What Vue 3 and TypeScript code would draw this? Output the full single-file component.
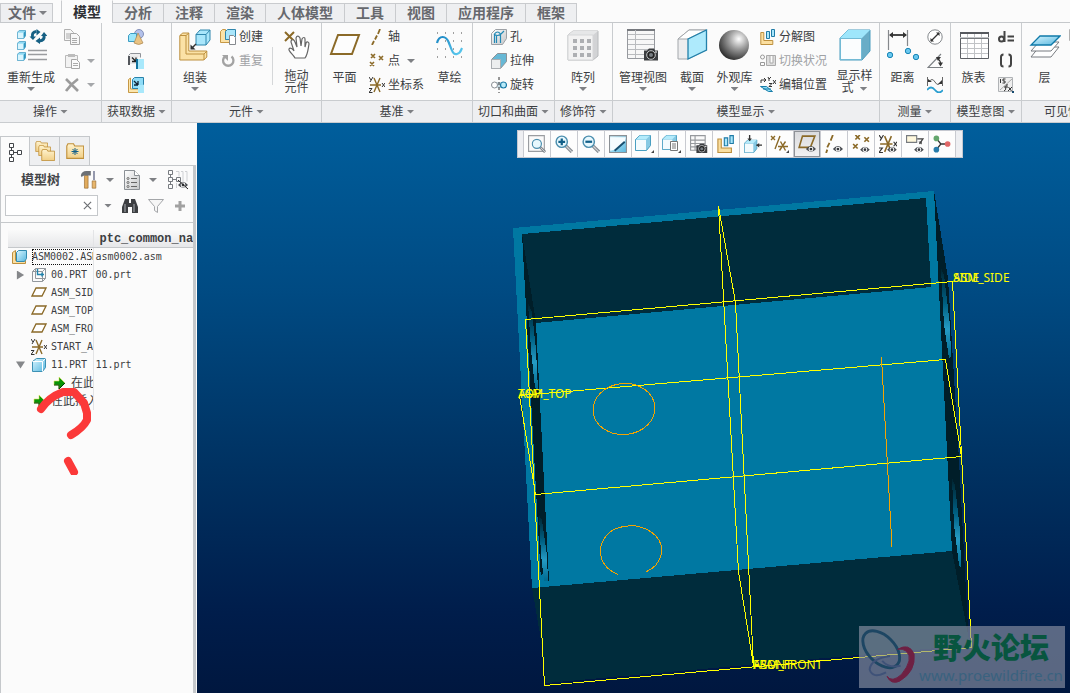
<script setup lang="ts">
import { ref } from 'vue'

interface SmallItem {
  icon: string
  label?: string
  title?: string
  disabled?: boolean
  menu?: boolean
}
interface BigItem {
  icon: string
  lines: string[]
  menu?: 'below' | 'inline'
  divided?: boolean
}
interface RibbonBlock {
  big?: BigItem
  column?: SmallItem[]
}
interface RibbonGroup {
  id: string
  label: string
  menu: boolean
  blocks: RibbonBlock[]
}
interface TreeRow {
  name: string
  common: string
  icon: string
  level: string
  expander?: 'open' | 'closed'
  focused?: boolean
}

const tabs = ['模型', '分析', '注释', '渲染', '人体模型', '工具', '视图', '应用程序', '框架']
const activeTab = ref('模型')
const search = ref('')

const groups: RibbonGroup[] = [
  {
    id: 'ops', label: '操作', menu: true,
    blocks: [
      { big: { icon: 'regen', lines: ['重新生成'], menu: 'below' } },
      {
        column: [
          { icon: 'copy', title: '复制', disabled: true },
          { icon: 'paste', title: '粘贴', disabled: true, menu: true },
          { icon: 'delete', title: '删除', disabled: true, menu: true },
        ],
      },
    ],
  },
  {
    id: 'data', label: '获取数据', menu: true,
    blocks: [
      {
        column: [
          { icon: 'udf', title: '用户定义特征' },
          { icon: 'copygeom', title: '复制几何' },
          { icon: 'shrink', title: '收缩包络' },
        ],
      },
    ],
  },
  {
    id: 'comp', label: '元件', menu: true,
    blocks: [
      { big: { icon: 'assemble', lines: ['组装'], menu: 'below' } },
      { column: [{ icon: 'create', label: '创建' }, { icon: 'repeat', label: '重复', disabled: true }] },
      { big: { icon: 'drag', lines: ['拖动', '元件'], divided: true } },
    ],
  },
  {
    id: 'datum', label: '基准', menu: true,
    blocks: [
      { big: { icon: 'plane', lines: ['平面'] } },
      {
        column: [
          { icon: 'axis', label: '轴' },
          { icon: 'point', label: '点', menu: true },
          { icon: 'csys', label: '坐标系' },
        ],
      },
      { big: { icon: 'sketch', lines: ['草绘'] } },
    ],
  },
  {
    id: 'cut', label: '切口和曲面', menu: true,
    blocks: [
      {
        column: [
          { icon: 'hole', label: '孔' },
          { icon: 'extrude', label: '拉伸' },
          { icon: 'revolve', label: '旋转' },
        ],
      },
    ],
  },
  { id: 'mod', label: '修饰符', menu: true, blocks: [{ big: { icon: 'pattern', lines: ['阵列'], menu: 'below' } }] },
  {
    id: 'disp', label: '模型显示', menu: true,
    blocks: [
      { big: { icon: 'views', lines: ['管理视图'], menu: 'below' } },
      { big: { icon: 'section', lines: ['截面'], menu: 'below' } },
      { big: { icon: 'sphere', lines: ['外观库'], menu: 'below' } },
      {
        column: [
          { icon: 'explode', label: '分解图' },
          { icon: 'toggle', label: '切换状况', disabled: true },
          { icon: 'editpos', label: '编辑位置' },
        ],
      },
      { big: { icon: 'style', lines: ['显示样', '式'], menu: 'inline' } },
    ],
  },
  {
    id: 'meas', label: '测量', menu: true,
    blocks: [
      { big: { icon: 'distance', lines: ['距离'] } },
      { column: [{ icon: 'diameter', title: '直径' }, { icon: 'angle', title: '角度' }, { icon: 'length', title: '长度' }] },
    ],
  },
  {
    id: 'intent', label: '模型意图', menu: true,
    blocks: [
      { big: { icon: 'family', lines: ['族表'] } },
      { column: [{ icon: 'dim', title: '切换尺寸' }, { icon: 'paren', title: '参数' }, { icon: 'fx', title: '关系' }] },
    ],
  },
  {
    id: 'vis', label: '可见性', menu: true,
    blocks: [
      { big: { icon: 'layers', lines: ['层'] } },
      { column: [{ icon: 'copy', title: '隐藏', disabled: true }] },
    ],
  },
]

const viewTools = [
  { icon: 'refit', title: '重新调整' },
  { icon: 'zoomin', title: '放大' },
  { icon: 'zoomout', title: '缩小' },
  { icon: 'repaint', title: '重画' },
  { icon: 'cubemenu', title: '显示样式' },
  { icon: 'saved', title: '已保存方向' },
  { icon: 'viewmgr', title: '视图管理器' },
  { icon: 'explode', title: '分解图' },
  { icon: 'cubearrows', title: '透视图' },
  { icon: 'datums', title: '基准显示过滤器' },
  { icon: 'planeeye', title: '平面显示', pressed: true },
  { icon: 'axiseye', title: '轴显示' },
  { icon: 'pointeye', title: '点显示' },
  { icon: 'csyseye', title: '坐标系显示' },
  { icon: 'noteeye', title: '注释显示' },
  { icon: 'spin', title: '旋转中心' },
]

const rows: TreeRow[] = [
  { name: 'ASM0002.ASM', common: 'asm0002.asm', icon: 'asm', level: 'root', focused: true },
  { name: '00.PRT', common: '00.prt', icon: 'skel', level: 'child', expander: 'closed' },
  { name: 'ASM_SIDE', common: '', icon: 'planes', level: 'child' },
  { name: 'ASM_TOP', common: '', icon: 'planes', level: 'child' },
  { name: 'ASM_FRONT', common: '', icon: 'planes', level: 'child' },
  { name: 'START_ASM', common: '', icon: 'csys', level: 'child' },
  { name: '11.PRT', common: '11.prt', icon: 'part', level: 'child', expander: 'open' },
  { name: '在此插入', common: '', icon: 'insert', level: 'grandchild' },
  { name: '在此插入', common: '', icon: 'insert', level: 'child' },
]
</script>

<template>
  <div class="app">
    <svg class="sprite" aria-hidden="true">
      <defs>
        <linearGradient id="gBlue" x1="0" y1="0" x2="1" y2="1"><stop offset="0" stop-color="#d9f6ff" /><stop offset="1" stop-color="#57b7df" /></linearGradient>
        <linearGradient id="gGrey" x1="0" y1="0" x2="1" y2="1"><stop offset="0" stop-color="#fff" /><stop offset="1" stop-color="#c4c6c8" /></linearGradient>
        <linearGradient id="gTan" x1="0" y1="0" x2="0" y2="1"><stop offset="0" stop-color="#fff3cf" /><stop offset="1" stop-color="#f1cf86" /></linearGradient>
        <linearGradient id="gWave" x1="0" y1="0" x2="1" y2="1"><stop offset="0" stop-color="#1b87c4" /><stop offset="1" stop-color="#5ccbf0" /></linearGradient>
        <radialGradient id="gBall" cx=".66" cy=".3" r=".75"><stop offset="0" stop-color="#fff" /><stop offset=".45" stop-color="#9a9a9a" /><stop offset="1" stop-color="#2c2c2c" /></radialGradient>
        <linearGradient id="gSlit" x1="0" y1="0" x2="0" y2="1"><stop offset="0" stop-color="#00222e" /><stop offset=".4" stop-color="#006184" /><stop offset=".68" stop-color="#259bc4" /><stop offset="1" stop-color="#006a90" /></linearGradient>
      </defs>

      <symbol id="cube10" viewBox="0 0 10 10"><path d="M.5 2.500l2-2h7v6l-2 3h-7z" fill="#8fd9f3" stroke="#53a5c8" /><path d="M1 3h6v6H1z" fill="#d9f5fe" /><path d="M7.500 3v6l2-3v-5z" fill="#2f93bd" /></symbol>
      <symbol id="eye" viewBox="0 0 10 7"><path d="M0 3.500Q5-2.500 10 3.500Q5 9 0 3.500z" fill="#484b50" /><circle cx="5" cy="3.500" r="2.400" fill="#fff" /><circle cx="5" cy="3.500" r="1.400" fill="#33363a" /></symbol>
      <symbol id="camera" viewBox="0 0 16 13"><path d="M1 3h3l2-2h5l1 2h3v10H1z" fill="#3c3e41" /><circle cx="8" cy="7.500" r="4.300" fill="#222" stroke="#c4c6c8" /><circle cx="8" cy="7.500" r="2" fill="#777d82" /><path d="M12 4h2v1h-2z" fill="#fff" /></symbol>

      <symbol id="regen" viewBox="0 0 32 32">
        <use href="#cube10" x="2" y="1" width="9" height="9" /><use href="#cube10" x="2" y="12" width="9" height="9" /><use href="#cube10" x="2" y="23" width="9" height="9" />
        <path d="M17.500 8q-1-5 4-5.500" fill="none" stroke="#166084" stroke-width="3" /><path d="M21.500 0v6.500l4-3.500zM14.500 7.500h6.500l-3 3.500z" fill="#166084" />
        <path d="M29 6q1 5.500-4.500 6" fill="none" stroke="#166084" stroke-width="3" /><path d="M25 8.500v6.500l-4.500-3zM26 7h6.500l-3.500-4z" fill="#166084" />
        <path d="M13 21.500h19M13 25.500h19M13 30.500h19" stroke="#9a9c9f" stroke-width="1.500" />
      </symbol>
      <symbol id="copy" viewBox="0 0 16 16"><path d="M.5.5h6l3 3v8h-9z" fill="#f7f7f7" stroke="#b0b0b0" /><path d="M2 5h4M2 7h4M2 9h4" stroke="#aaa" /><path d="M6.500 4.500h6l3 3v8h-9z" fill="#f7f7f7" stroke="#a8a8a8" /><path d="M8 9.500h5M8 11.500h5M8 13.500h5" stroke="#aaa" /></symbol>
      <symbol id="paste" viewBox="0 0 16 16"><path d="M1.500 2.500h12v12h-12z" fill="#f2f2f2" stroke="#b9b9b9" /><path d="M4 1h7v3H4z" fill="#bcbcbc" /><path d="M7.500 6.500h5l3 3v6h-8z" fill="#fafafa" stroke="#a5a5a5" /><path d="M9 10.500h5M9 12.500h5" stroke="#aaa" /></symbol>
      <symbol id="delete" viewBox="0 0 16 16"><path d="M2 2l12 12M14 2Q7 7 2 14" stroke="#9b9b9b" stroke-width="2.600" fill="none" /></symbol>
      <symbol id="udf" viewBox="0 0 16 16"><circle cx="11" cy="5" r="4.500" fill="#b3c1ea" stroke="#8390b9" /><path d="M.5 6.500l2-2h6v6l-2 2h-6z" fill="#9be6fb" stroke="#3c9cc2" /><path d="M10 4l5 10q-4 3-9 0z" fill="#e9c384" stroke="#a98550" stroke-width=".7" /></symbol>
      <symbol id="copygeom" viewBox="0 0 16 16"><path d="M.5 2.500l2-2h10v4" fill="#eee" stroke="#8f9399" /><path d="M2 3h8v8H2z" fill="#e6e7e8" /><path d="M0 3h2v9H0z" fill="#53565b" /><path d="M4 4.500l4 4M8 4.500v4H4" stroke="#222" fill="none" stroke-width="1.300" /><path d="M9 6h7v10H9z" fill="#a8e8fb" /><path d="M9 6v10" stroke="#13739e" stroke-width="2" /></symbol>
      <symbol id="shrink" viewBox="0 0 16 16"><path d="M.5 2.500l2-1.500v11h9l-1 3.500H.5z" fill="#fbe6ae" stroke="#c69845" /><path d="M4.500 2.500l2-2h9v7l-2 4h-9z" fill="#8fdcf7" stroke="#2882aa" /><path d="M6 4l4 4M10 4v4H6" stroke="#123" fill="none" stroke-width="1.300" /><path d="M10 8h6v8h-6z" fill="#a8e8fb" /></symbol>
      <symbol id="assemble" viewBox="0 0 32 32"><path d="M.8 6.500l3-2.500h6v18h18v6l-3 3H.8z" fill="#fbe2a6" stroke="#bd903f" /><path d="M7 6.500V25h18l3-3M1 6.500h6l3-2.500M25 25v6" fill="none" stroke="#bd903f" /><path d="M17 5.500l4-4.500h10v10l-4 5H17z" fill="#a9e6fb" stroke="#2f86ad" /><path d="M17 5.500h10V16M27 5.500L31 1" fill="none" stroke="#2f86ad" /><path d="M17 15l-4 4" stroke="#333" stroke-width="1.500" /><path d="M11.500 15.500v5h5z" fill="#333" /></symbol>
      <symbol id="create" viewBox="0 0 16 16"><path d="M.5 2.500l2-2h3v10h8v3h-13z" fill="#fbe2a6" stroke="#c69845" /><path d="M5.500 2.500l2-2h8v7l-2 3h-8z" fill="#a9e6fb" stroke="#2f86ad" /><path d="M9.500 6.500h4l2 2v7h-6z" fill="#fff" stroke="#85898e" /></symbol>
      <symbol id="repeat" viewBox="0 0 16 16"><path d="M5 3.500a5.200 5.200 0 1 0 6.500 0" fill="none" stroke="#a3a3a3" stroke-width="2.300" /><path d="M2 2h6v6z" fill="#a3a3a3" /></symbol>
      <symbol id="drag" viewBox="0 0 32 32"><path d="M4 3l9 9M13 3l-9 9" stroke="#8b6a28" stroke-width="2" /><path d="M14 29c-2-4-7-7-6-9 1-2 4 0 5 2l-3-9c0-3 3-3 4 0l2 5-1-9c1-3 3-2 4 0l1 8 1-7c1-2 3-2 3 0l0 8 1-4c1-2 3-1 3 1-1 5-1 10-4 14z" fill="#fff" stroke="#666" stroke-width="1.200" /></symbol>
      <symbol id="plane" viewBox="0 0 32 32"><path d="M9 6h21l-7 19H2z" fill="#fdfdfd" stroke="#8b6a28" stroke-width="2" /></symbol>
      <symbol id="axis" viewBox="0 0 16 16"><path d="M11 0l-2 5M8 6.500l-2 4M5 12l-2 4" stroke="#8b6a28" stroke-width="1.800" /></symbol>
      <symbol id="point" viewBox="0 0 16 16"><path d="M2 1l4 4M6 1L2 5M10 3l4 4M14 3l-4 4M1 9l4 4M5 9l-4 4" stroke="#8b6a28" stroke-width="1.600" /></symbol>
      <symbol id="csys" viewBox="0 0 16 16"><path d="M1 8h11M5 1l6 14M11 1L5 15" stroke="#8b6a28" stroke-width="1.400" /><path d="M0 0l2 3M4 0L1 5M0 11.500h3L0 15.500h3.500M13 6l3 4M16 6l-3 4" stroke="#333" fill="none" /></symbol>
      <symbol id="sketch" viewBox="0 0 32 32"><path d="M3 4h26M3 12h26M3 20h26M3 28h26" stroke="#444" stroke-dasharray="1 7" /><path d="M3 14c2-8 9-8 12 0s4 12 8 11 4-4 5-6" fill="none" stroke="url(#gWave)" stroke-width="2.200" /></symbol>
      <symbol id="hole" viewBox="0 0 16 16"><path d="M.5 4.500l4-4h11v9l-4 6H.5z" fill="url(#gGrey)" stroke="#9da1a6" /><path d="M3.500 14V5q3-4 6 0v9M5.500 14V6M3 5q3 3 7 0l3-3" fill="none" stroke="#2389b5" stroke-width="1.200" /></symbol>
      <symbol id="extrude" viewBox="0 0 16 16"><path d="M.5 6.500l6-6h9v8l-6 7h-9z" fill="#67b8d5" stroke="#8d9297" /><path d="M.5 6.500h9v9h-9z" fill="#eceeef" stroke="#aaaeb2" /></symbol>
      <symbol id="revolve" viewBox="0 0 16 16"><path d="M4 5h8v6H4z" fill="#c7dbe4" /><circle cx="3.500" cy="8" r="3" fill="#fff" stroke="#898e93" /><circle cx="12.500" cy="8" r="3" fill="#b8eaf9" stroke="#1979a5" stroke-width="1.200" /><path d="M8 0v16" stroke="#333" stroke-dasharray="3 2" /></symbol>
      <symbol id="pattern" viewBox="0 0 32 32"><path d="M1 6l5-4h25v25l-5 4H1z" fill="#d2d3d5" stroke="#b8babc" /><path d="M1 6l5-4h25l-5 4z" fill="#e6e7e8" /><path d="M1 6h25v25H1z" fill="#f2f2f2" stroke="#d5d6d8" /><path d="M6 12h18M6 19h18M6 26h18" stroke="#adafb2" stroke-width="4" stroke-dasharray="4 3" /></symbol>
      <symbol id="views" viewBox="0 0 32 32"><path d="M.5.5h27v29H.5z" fill="#f7f7f7" stroke="#96999e" /><path d="M0 1h28" stroke="#76797e" stroke-width="2" /><path d="M1 5.500h26M1 10.500h26M1 15.500h26M1 20.500h26M1 25.500h26M8.500 1v28" stroke="#b9bbbe" /><use href="#camera" x="16" y="18" width="16" height="14" /></symbol>
      <symbol id="section" viewBox="0 0 32 32"><path d="M2 10L13 1h17v20L12 30H2z" fill="#ededee" stroke="#a3a7ab" /><path d="M2 10L13 1h17L12 10z" fill="#fff" stroke="#a3a7ab" /><path d="M12 10l18.500-9v20L12 30z" fill="#aeeafc" stroke="#2280aa" stroke-width="1.300" /></symbol>
      <symbol id="sphere" viewBox="0 0 32 32"><circle cx="15" cy="16" r="15" fill="url(#gBall)" /></symbol>
      <symbol id="explode" viewBox="0 0 16 16"><path d="M.8 3.500h3v8h9v4h-12z" fill="#fbdfa0" stroke="#bd903f" /><path d="M6.500 2.500h3v7h-3zM11.500.5h3v7h-3z" fill="#a9e6fb" stroke="#1f7ba6" /></symbol>
      <symbol id="toggle" viewBox="0 0 16 16"><path d="M6.500 2.500h9v10h-9zM10 3v7h3V3" fill="#ddd" stroke="#aaa" /><circle cx="2.500" cy="4" r="2" fill="none" stroke="#999" /><path d="M.5 9.500h4v3h-4z" fill="none" stroke="#999" /></symbol>
      <symbol id="editpos" viewBox="0 0 16 16"><path d="M.5 9.500h6l6 5h-4zM3 12h8" fill="#8bdcf5" stroke="#197da9" /><path d="M1 6V3h4M4 1l2 2-2 2M8 0l1 2 2-2M9 2v2M9 6.500h3l-3 3h3M13 3l3 4M16 3l-3 4" stroke="#333" fill="none" /></symbol>
      <symbol id="style" viewBox="0 0 32 32"><path d="M1 9l8-8h22v21l-8 9H1z" fill="#69adc7" stroke="#4b9dbf" /><path d="M1 9l8-8h22l-8 8z" fill="#9ee6fb" /><path d="M1.500 9.500h21v21h-21z" fill="#fbfdfe" stroke="#72bad5" /></symbol>
      <symbol id="distance" viewBox="0 0 32 32"><path d="M1.500 1v20M20.500 1v16" stroke="#85888c" stroke-width="1.200" /><path d="M3 6h16" stroke="#333" stroke-width="1.800" /><path d="M6 3L2 6l4 3zM16 3l4 3-4 3z" fill="#333" /><g fill="#68c7ef" stroke="#1885b5"><circle cx="3" cy="26" r="2.700" /><circle cx="21" cy="22" r="2.700" /><circle cx="29" cy="28" r="2.700" /></g></symbol>
      <symbol id="diameter" viewBox="0 0 16 16"><circle cx="8" cy="8" r="7.200" fill="#fff" stroke="#85898d" /><path d="M4 12l8-8" stroke="#333" stroke-width="1.300" /><path d="M9 3.500h3.500v3.500zM3.500 9v3.500h3.500z" fill="#333" /></symbol>
      <symbol id="angle" viewBox="0 0 16 16"><path d="M14 1L1 14.500h15" fill="none" stroke="#7c8084" stroke-width="1.200" /><path d="M11 6q3 2 2.500 6" fill="none" stroke="#333" stroke-width="1.200" /><path d="M9 4h5l-3 4zM11 9.500h5l-2.500 4z" fill="#333" /></symbol>
      <symbol id="length" viewBox="0 0 16 16"><path d="M.5 0v9M15.500 0v9M2 5q3-5 6 0t6 0" stroke="#666" fill="none" /><path d="M1 2v3h4zM15 3v4h-4z" fill="#333" /><path d="M0 13q4-5 8 0t8 0" fill="none" stroke="#2b9fd0" stroke-width="1.800" /></symbol>
      <symbol id="family" viewBox="0 0 32 32"><path d="M2.500 3.500h28v26h-28z" fill="#fff" stroke="#5d6065" /><path d="M2 4h29" stroke="#55585d" stroke-width="2" /><path d="M2 8.500h29M9.500 5v24M16.500 5v24M23.500 5v24M3 14.500h27M3 19.500h27M3 24.500h27" stroke="#c1c3c6" /><path d="M2 9.500h29" stroke="#76797d" /></symbol>
      <symbol id="dim" viewBox="0 0 16 16"><circle cx="3.500" cy="10" r="2.500" fill="none" stroke="#444" stroke-width="2" /><path d="M6.500 2v11M9.500 7.500H16M9.500 11.500H16" stroke="#444" stroke-width="2" /></symbol>
      <symbol id="paren" viewBox="0 0 16 16"><path d="M5.500 1.500q-2.500 0-2.500 2.500v7q0 2.500 2.500 2.500M10.500 1.500q2.500 0 2.500 2.500v7q0 2.500-2.500 2.500" fill="none" stroke="#444" stroke-width="2" /></symbol>
      <symbol id="fx" viewBox="0 0 16 16"><path d="M.5.5h14v14H.5z" fill="#eee" stroke="#b0b3b6" /><path d="M2 13L14 2" stroke="#aaa" /><path d="M2.500 2v4M7.500 2H5v2h2v2H4.500M6 14q2 0 2-5 0-2 2-1M6 10h4M10.500 10l3 4M14 10l-4 4" fill="none" stroke="#333" /><path d="M14 14h2v2h-2z" fill="#174b70" /></symbol>
      <symbol id="layers" viewBox="0 0 32 32"><g fill="#fff" stroke="#777b80"><path d="M10 18h20l-8 10H2z" /><path d="M10 13h20l-8 9H2z" /></g><path d="M11 7h20l-9 9H2z" fill="url(#gBlue)" stroke="#0f7aa9" stroke-width="1.300" /></symbol>

      <symbol id="lens" viewBox="0 0 16 16"><path d="M9 9l6 6" stroke="#858a90" stroke-width="3" /><path d="M10 10l5 5" stroke="#d2d5d8" /><circle cx="6" cy="6" r="5" fill="#e7f8fe" stroke="#4b8eae" stroke-width="1.300" /></symbol>
      <symbol id="refit" viewBox="0 0 16 16"><path d="M.5.5h14v14H.5z" fill="#fafafa" stroke="#9a9da1" /><use href="#lens" x="3" y="3" width="13" height="13" /></symbol>
      <symbol id="zoomin" viewBox="0 0 16 16"><use href="#lens" width="16" height="16" /><path d="M3 6h6M6 3v6" stroke="#125f88" stroke-width="2" /></symbol>
      <symbol id="zoomout" viewBox="0 0 16 16"><use href="#lens" width="16" height="16" /><path d="M3 6h6" stroke="#125f88" stroke-width="2" /></symbol>
      <symbol id="repaint" viewBox="0 0 16 16"><path d="M.5.5h15v15H.5z" fill="url(#gBlue)" stroke="#8b9095" /><path d="M1 2h14l-1 4-9 7-4 1z" fill="#f5fcff" /><path d="M14 6l-9 8" stroke="#174f70" stroke-width="1.600" /></symbol>
      <symbol id="part" viewBox="0 0 16 16"><path d="M1.500 4.500l4-3h9v9l-3 4h-10z" fill="url(#gBlue)" stroke="#3d91b4" /><path d="M1.500 4.500h10v10M11.500 4.500l3-3" fill="none" stroke="#fff" /></symbol>
      <symbol id="cubew" viewBox="0 0 16 16"><path d="M.5 4.500l4-4h11v10l-4 5H.5z" fill="#86c9e3" stroke="#4a9fc1" /><path d="M1 4.500l4-4h10l-4 4z" fill="#b4ebfb" /><path d="M1 5h10v10H1z" fill="#f3fbfe" /></symbol>
      <symbol id="cubemenu" viewBox="0 0 20 18"><use href="#cubew" width="16" height="16" /><path d="M19 15v3h-3z" fill="#444" /></symbol>
      <symbol id="saved" viewBox="0 0 20 18"><use href="#cubew" width="15" height="15" /><path d="M8.500 6.500h7v9h-7z" fill="#fff" stroke="#777" /><path d="M10 9h4M10 11h4M10 13h4" stroke="#777" /><path d="M19 15v3h-3z" fill="#444" /></symbol>
      <symbol id="viewmgr" viewBox="0 0 16 16"><path d="M.5.5h13v13H.5zM1 4.500h12M1 7.500h12M1 10.500h12M4.500 1v12" fill="#fafafa" stroke="#96999d" /><use href="#camera" x="5" y="7" width="11" height="9" /></symbol>
      <symbol id="cubearrows" viewBox="0 0 16 16"><use href="#cubew" x="0" y="4" width="12" height="12" /><path d="M5 0v5M16 9h-5" stroke="#333" stroke-width="1.200" /><path d="M3 3h4L5 5.500zM13.500 7v4L11 9z" fill="#333" /></symbol>
      <symbol id="datums" viewBox="0 0 20 18"><path d="M1 1l4 4M5 1L1 5M10 1L5 14M8 11.500h10M10.500 6.500l5 9M15.500 6.500l-6 9" stroke="#8b6a28" stroke-width="1.400" /><path d="M19 15v3h-3z" fill="#444" /></symbol>
      <symbol id="planeeye" viewBox="0 0 16 16"><path d="M4 1h11l-4 10H1z" fill="none" stroke="#8b6a28" stroke-width="1.400" /><use href="#eye" x="7" y="9" width="9" height="7" /></symbol>
      <symbol id="axiseye" viewBox="0 0 16 16"><path d="M7 0L5 5M4 7l-2 4M2 13l-1 3" stroke="#8b6a28" stroke-width="1.600" /><use href="#eye" x="7" y="9" width="9" height="7" /></symbol>
      <symbol id="pointeye" viewBox="0 0 16 16"><path d="M3 0l4 4M7 0L3 4M11 2l4 4M15 2l-4 4M1 8l4 4M5 8l-4 4" stroke="#8b6a28" stroke-width="1.500" /><use href="#eye" x="7" y="10" width="9" height="6" /></symbol>
      <symbol id="csyseye" viewBox="0 0 16 16"><use href="#csys" width="16" height="16" /><use href="#eye" x="7" y="10" width="9" height="6" /></symbol>
      <symbol id="noteeye" viewBox="0 0 16 16"><path d="M.5.500h9v6h-9z" fill="#fff8dd" stroke="#777b80" /><path d="M10 3.500h5L12 8" stroke="#444" fill="none" stroke-width="1.200" /><path d="M11 6l3 2.500 0-3z" fill="#444" /><use href="#eye" x="7" y="10" width="9" height="6" /></symbol>
      <symbol id="spin" viewBox="0 0 16 16"><path d="M3 3l4 5-4 5M7 8h6" fill="none" stroke="#333" stroke-width="1.200" /><circle cx="3" cy="3" r="2.500" fill="#63a66d" /><circle cx="3" cy="13" r="2.500" fill="#287caa" /><circle cx="13" cy="8" r="2.500" fill="#e16767" /></symbol>

      <symbol id="tabtree" viewBox="0 0 16 20"><path d="M2.500 1.500h4v4h-4zM2.500 8.500h4v4h-4zM2.500 15.500h4v4h-4zM10.500 8.500h4v4h-4zM4.500 6v2M4.500 13v2M7 10.500h3" fill="#fff" stroke="#43464a" /></symbol>
      <symbol id="folder" viewBox="0 0 16 14"><path d="M.7 2.500l1-2h5l1 2h8v11H.7z" fill="url(#gTan)" stroke="#c0903a" /></symbol>
      <symbol id="tabfolders" viewBox="0 0 20 20"><use href="#folder" x="0" y="0" width="13" height="11" /><use href="#folder" x="3" y="4" width="13" height="11" /><use href="#folder" x="6" y="8" width="14" height="12" /></symbol>
      <symbol id="tabfav" viewBox="0 0 20 18"><use href="#folder" x="1" y="1" width="18" height="16" /><path d="M10 6v7M6.500 9.500h7M7.500 7l5 5M12.500 7l-5 5" stroke="#125f88" /></symbol>
      <symbol id="tools" viewBox="0 0 18 22"><path d="M4 6h4v14H4z" fill="#e1ab5c" stroke="#94672d" stroke-width=".7" /><path d="M0 6q1-5 6-5h5v5H4q-2 0-3 2z" fill="#6c7075" /><path d="M14.500 1v10" stroke="#8b8fa5" stroke-width="2" /><path d="M12.500 12h4v8h-4z" fill="#e8b66b" stroke="#94672d" stroke-width=".7" /></symbol>
      <symbol id="listdoc" viewBox="0 0 16 20"><path d="M.5.5h10l5 5v14H.5z" fill="url(#gGrey)" stroke="#8b9095" /><path d="M10.500.5v5h5" fill="#fff" stroke="#8b9095" /><path d="M7 8.500h6M7 12.500h6M7 16.500h6" stroke="#666" /><g fill="#fff" stroke="#666"><circle cx="4" cy="8.500" r="1" /><circle cx="4" cy="12.500" r="1" /><circle cx="4" cy="16.500" r="1" /></g></symbol>
      <symbol id="treehide" viewBox="0 0 20 20"><path d="M.5.5h4v4h-4zM.5 7.500h4v4h-4zM.5 14.500h4v4h-4zM8.500 7.500h4v4h-4zM2.500 5v2M2.500 12v2M5 9.500h3" fill="none" stroke="#777b80" /><path d="M8 1.500h3v5M13 1.500h2v11M17 1.500h2v10M8.500 13v5" fill="none" stroke="#cfd1d4" /><use href="#eye" x="10" y="11" width="10" height="8" /><path d="M10 10l10 9" stroke="#222" /></symbol>
      <symbol id="binoc" viewBox="0 0 16 16"><path d="M3 1h4v4h2V1h4l3 8v6h-6V9H6v6H0V9z" fill="#3d3f42" /><path d="M3 6v8M12 6v8" stroke="#868a8e" stroke-width="1.500" /></symbol>
      <symbol id="funnel" viewBox="0 0 16 16"><path d="M.5 1.500h15l-6 7v6l-3-2v-4z" fill="#f6f6f6" stroke="#a4a6a9" /></symbol>
      <symbol id="plus" viewBox="0 0 12 12"><path d="M6 1v10M1 6h10" stroke="#a1a1a1" stroke-width="3" /></symbol>
      <symbol id="cross" viewBox="0 0 10 10"><path d="M1 1l8 8M9 1L1 9" stroke="#6d7074" stroke-width="1.300" /></symbol>
      <symbol id="asm" viewBox="0 0 16 16"><path d="M.5 3.500l3-2v10h10v3h-13z" fill="#fbdfa0" stroke="#bd903f" /><path d="M4.500 3.500l2-2h8v8l-2 3h-8z" fill="url(#gBlue)" stroke="#318bb0" /></symbol>
      <symbol id="skel" viewBox="0 0 16 16"><path d="M1.500 4.500l3-3h10v10l-3 3h-10zM1.500 4.500h10v10M4.500 1.500v10h10M11.500 4.500l3-3" fill="none" stroke="#93989d" /><path d="M6.500 2v5.500H13M11 5.500v4" fill="none" stroke="#2183ad" stroke-width="1.400" /></symbol>
      <symbol id="planes" viewBox="0 0 16 16"><path d="M5 3h10l-4 8H1z" fill="#fff" stroke="#8b6a28" stroke-width="1.300" /></symbol>
      <symbol id="insert" viewBox="0 0 16 16"><path d="M3 6h5V2l6 6-6 6v-4H3z" fill="#079307" stroke="#e5e65c" stroke-width=".6" /><path d="M3 10h5v4l6-6" fill="none" stroke="#033f03" /></symbol>
    </svg>

    <header class="ribbon">
      <nav class="tabs" aria-label="功能区">
        <button type="button" class="tab file">文件<span class="caret"></span></button>
        <button v-for="t in tabs" :key="t" type="button" class="tab" :class="{ active: t === activeTab }" @click="activeTab = t">{{ t }}</button>
      </nav>
      <div class="groups">
        <section v-for="g in groups" :key="g.id" class="group" :class="g.id">
          <div class="body">
            <template v-for="(b, bi) in g.blocks" :key="bi">
              <button v-if="b.big" type="button" class="big" :class="{ divided: b.big.divided }">
                <svg class="i32" aria-hidden="true"><use :href="'#' + b.big.icon" /></svg>
                <span class="caption" :class="{ two: b.big.lines.length > 1 }">
                  <span v-for="(l, li) in b.big.lines" :key="l" class="line">{{ l }}<span v-if="b.big.menu === 'inline' && li === 1" class="caret"></span></span>
                </span>
                <span v-if="b.big.menu === 'below'" class="caret"></span>
              </button>
              <div v-else class="column">
                <button v-for="s in b.column" :key="s.icon" type="button" class="small" :class="{ disabled: s.disabled }" :aria-label="s.label ?? s.title">
                  <svg class="i16" aria-hidden="true"><use :href="'#' + s.icon" /></svg>
                  <span v-if="s.label">{{ s.label }}</span>
                  <span v-if="s.menu" class="caret"></span>
                </button>
              </div>
            </template>
          </div>
          <button type="button" class="group-label">{{ g.label }}<span v-if="g.menu" class="caret"></span></button>
        </section>
      </div>
    </header>

    <main class="work">
      <aside class="side">
        <div class="side-tabs">
          <button type="button" class="side-tab active" aria-label="模型树"><svg class="i20"><use href="#tabtree" /></svg></button>
          <button type="button" class="side-tab" aria-label="文件夹浏览器"><svg class="i20"><use href="#tabfolders" /></svg></button>
          <button type="button" class="side-tab" aria-label="收藏夹"><svg class="i20"><use href="#tabfav" /></svg></button>
        </div>
        <div class="panel">
          <div class="panel-head">
            <h2>模型树</h2>
            <button type="button" aria-label="设置" class="tool"><svg class="i20"><use href="#tools" /></svg><span class="caret"></span></button>
            <button type="button" aria-label="显示" class="tool"><svg class="i20"><use href="#listdoc" /></svg><span class="caret"></span></button>
            <button type="button" aria-label="隐藏" class="tool last"><svg class="i20"><use href="#treehide" /></svg></button>
          </div>
          <div class="search">
            <div class="box">
              <input v-model="search" type="text" aria-label="搜索" />
              <button type="button" aria-label="清除" @click="search = ''"><svg class="i8"><use href="#cross" /></svg></button>
            </div>
            <button type="button" class="options" aria-label="搜索选项"><span class="caret"></span></button>
            <button type="button" aria-label="查找"><svg class="i16"><use href="#binoc" /></svg></button>
            <button type="button" aria-label="过滤"><svg class="i16"><use href="#funnel" /></svg></button>
            <button type="button" aria-label="添加"><svg class="i12"><use href="#plus" /></svg></button>
          </div>
          <table class="tree">
            <colgroup><col class="c-name" /><col /></colgroup>
            <thead><tr><th></th><th>ptc_common_name</th></tr></thead>
            <tbody>
              <tr v-for="(r, i) in rows" :key="i">
                <td>
                  <div class="node" :class="r.level">
                    <span class="expander" :class="r.expander"></span>
                    <svg class="i16" aria-hidden="true"><use :href="'#' + r.icon" /></svg>
                    <span class="name" :class="{ focused: r.focused, inserter: r.icon === 'insert' }">{{ r.name }}</span>
                  </div>
                </td>
                <td>{{ r.common }}</td>
              </tr>
            </tbody>
          </table>
        </div>
        <svg class="mark" viewBox="0 0 60 90" aria-hidden="true"><path d="M6 24C12 15 20 10 28 7H39L49 18 52 28V35Q48 43 36 50M33 76L39 87" /></svg>
      </aside>

      <section class="view">
        <svg class="scene" viewBox="197 123 873 570" preserveAspectRatio="xMinYMin meet" role="img" aria-label="装配模型">
          <g shape-rendering="crispEdges">
            <path fill="#001e29" d="M934 191L948 278 959 460 968 628 969 647 952 551z" />
            <path fill="#002c3c" d="M532 588L952 551 970 645 546 683 541 640z" />
            <path fill="#0078a2" d="M513 228L934 191 952 551 532 588z" />
            <path fill="#002c3c" d="M522 234L926 198 931 287 536 323z" />
            <path fill="#001e29" d="M522 234L536 323 549 581H541z" />
            <path fill="#0078a2" d="M541 575l5-2v8h-5z" />
            <g fill="url(#gSlit)">
              <path d="M528 303L532 312 536 350 538 390 535 388 531 350z" />
              <path d="M539 515L542 520 547 556 548 581H544L541 555z" />
              <path d="M941 268L944 275 950 325 951 357 949 358 944 325z" />
              <path d="M952 478L955 485 960 530 961 568 959 565 954 525z" />
            </g>
            <g fill="none" stroke="#ff0">
              <path d="M525.5 319.500L952.500 281.500 971.500 647.500 544.500 685.500z" />
              <path d="M519.500 395.500L945.500 359.500 961.500 456.500 535.500 494.500z" />
              <path d="M718.500 206.500L735.500 302.500 753.500 665.500 738.500 571.500z" />
            </g>
            <g fill="none" stroke="#f5a300">
              <ellipse cx="624" cy="409" rx="31" ry="25.500" transform="rotate(-5 624 409)" />
              <path d="M618.500 574.500C594 566 596 538 615 529C640 519 665 535 661.500 554Q658 567 646.500 571.500M881.500 357.500L892 547" />
            </g>
          </g>
          <g class="tag">
            <text x="953" y="282">ASM_SIDE</text><text x="953" y="282">SIDE</text>
            <text x="518" y="398">ASM_TOP</text><text x="518" y="398">TOP</text>
            <text x="753" y="669">ASM_FRONT</text><text x="753" y="669">FRONT</text>
          </g>
        </svg>

        <div class="view-bar" role="toolbar" aria-label="图形工具栏">
          <span class="grip"></span>
          <button v-for="v in viewTools" :key="v.title" type="button" :class="{ pressed: v.pressed }" :aria-label="v.title">
            <svg class="i18" aria-hidden="true"><use :href="'#' + v.icon" /></svg>
          </button>
          <span class="grip end"></span>
        </div>

        <div class="brand">
          <svg viewBox="0 0 60 60" aria-hidden="true">
            <g fill="none">
              <ellipse cx="23" cy="22" rx="23" ry="14" transform="rotate(45 23 22)" stroke="#1d4663" stroke-width="3" />
              <path d="M40 22Q52 15 57 27 59 45 42 55 33 59 29 50 34 57 44 48 57 32 49 24 45 21 40 22z" fill="#6e2043" stroke="#6e2043" />
              <path d="M32 29Q12 32 11 43 14 53 28 46M24 34Q31 42 43 39" stroke="#3f5278" stroke-width="2" />
            </g>
          </svg>
          <div class="brand-text"><strong>野火论坛</strong><span>www.proewildfire.cn</span></div>
        </div>
      </section>
    </main>
  </div>
</template>

<style>
body { margin: 0; }
</style>

<style scoped>
.app {
  min-height: 100vh;
  display: flex;
  flex-direction: column;
  overflow: hidden;
  background: #fbfbfb;
  color: #3c3e42;
  font: 12px/16px "Liberation Sans", "Noto Sans CJK SC", sans-serif;
}
button {
  margin: 0;
  padding: 0;
  border: 0;
  background: none;
  color: inherit;
  font: inherit;
  cursor: pointer;
}
svg { display: block; flex: none; }
.sprite { position: absolute; width: 0; height: 0; }
.i8 { width: 9px; height: 9px; }
.i12 { width: 12px; height: 12px; }
.i16 { width: 16px; height: 16px; }
.i18 { width: 20px; height: 18px; }
.i20 { width: 20px; height: 20px; }
.i32 { width: 32px; height: 32px; }
.caret {
  display: inline-block;
  flex: none;
  width: 8px;
  height: 4px;
  background: #7e8084;
  clip-path: polygon(0 0, 100% 0, 50% 100%);
}

.tabs {
  display: flex;
  height: 23px;
  padding-top: 3px;
  box-sizing: border-box;
  border-bottom: 1px solid #c5c8cb;
}
.tab {
  height: 19px;
  padding: 0 11px;
  border: solid #c9cbce;
  border-width: 1px 1px 0 0;
  background: #eeeff1;
  color: #66686d;
  font-size: 14px;
  font-weight: 700;
  line-height: 16px;
  white-space: nowrap;
}
.tab.file {
  display: flex;
  align-items: center;
  gap: 3px;
  width: 53px;
  padding: 0 0 0 7px;
  margin-right: 8px;
  border-left-width: 1px;
  box-sizing: border-box;
}
.tab.active {
  height: 23px;
  margin-top: -3px;
  border-left-width: 1px;
  border-top-color: #fbfbfb;
  background: #fbfbfb;
  color: #2f3135;
}

.groups { display: flex; height: 100px; overflow: hidden; }
.group {
  flex: none;
  display: flex;
  flex-direction: column;
  box-sizing: border-box;
  border-right: 1px solid #c9cccf;
}
.body {
  flex: 1;
  display: grid;
  align-items: start;
}
.group-label {
  display: flex;
  align-items: center;
  justify-content: center;
  gap: 3px;
  height: 23px;
  box-sizing: border-box;
  border: solid #c9cccf;
  border-width: 1px 0;
  background: #eeeff1;
  white-space: nowrap;
}
.ops { width: 102px; }
.ops .body { grid-template-columns: 62px 38px; }
.data { width: 70px; }
.data .body { grid-template-columns: 20px; padding-left: 24px; }
.comp { width: 150px; }
.comp .body { grid-template-columns: 46px 54px 49px; }
.datum { width: 151px; }
.datum .body { grid-template-columns: 45px 60px 45px; }
.cut { width: 82px; }
.cut .body { grid-template-columns: 60px; padding-left: 16px; }
.mod { width: 58px; }
.mod .body { grid-template-columns: 56px; }
.disp { width: 267px; }
.disp .body { grid-template-columns: 60px 38px 47px 72px 49px; }
.meas, .intent { width: 71px; }
.meas .body, .intent .body { grid-template-columns: 45px 20px; }
.vis { width: 92px; }
.vis .body { grid-template-columns: 45px 40px; }

.big {
  display: flex;
  flex-direction: column;
  align-items: center;
  height: 77px;
  padding-top: 6px;
  box-sizing: border-box;
}
.big.divided {
  background: linear-gradient(#d5d7d9, #d5d7d9) 0 24px / 1px 38px no-repeat;
}
.caption { margin-top: 9px; }
.caption .line { display: block; white-space: nowrap; }
.caption.two .line { line-height: 12px; }
.caption.two .caret { margin-left: 6px; vertical-align: middle; }
.big > .caret { margin-top: 1px; }
.column { padding-top: 2px; }
.small {
  display: flex;
  align-items: center;
  gap: 3px;
  height: 24px;
  padding: 0 2px;
  white-space: nowrap;
}
.small .caret { margin-left: 4px; }
.small.disabled { color: #a0a2a5; }
.small.disabled .caret { background: #a5a7aa; }

.work { flex: 1; display: flex; min-height: 570px; }
.side {
  position: relative;
  flex: none;
  width: 197px;
  display: flex;
  flex-direction: column;
}
.side-tabs { display: flex; height: 42px; padding-top: 13px; box-sizing: border-box; }
.side-tab {
  display: flex;
  align-items: center;
  justify-content: center;
  width: 30px;
  height: 29px;
  box-sizing: border-box;
  border: solid #c5c8cb;
  border-width: 1px 1px 0 0;
  background: #eeeff1;
}
.side-tab.active { height: 30px; border-left-width: 1px; background: #fbfbfb; z-index: 1; }
.panel {
  flex: 1;
  width: 196px;
  box-sizing: border-box;
  border: solid #c5c8cb;
  border-width: 1px 3px 0 1px;
}
.panel-head {
  display: flex;
  align-items: center;
  height: 28px;
  padding-left: 20px;
}
.panel-head h2 { margin: 0; width: 58px; font-size: 13px; line-height: 16px; color: #44464a; }
.tool { display: flex; align-items: center; gap: 7px; width: 43px; }
.tool.last { width: 20px; margin-left: 3px; }
.search {
  display: flex;
  align-items: center;
  gap: 10px;
  height: 28px;
  padding: 0 3px 0 4px;
  border-bottom: 1px solid #c5c8cb;
}
.box {
  display: flex;
  align-items: center;
  width: 93px;
  height: 21px;
  margin-bottom: 5px;
  box-sizing: border-box;
  border: 1px solid #c5c8cb;
  background: #fff;
}
.search > button { margin-bottom: 5px; }
.search > .options { margin-left: -4px; }
.options .caret { display: block; }
.box input { flex: 1; min-width: 0; height: 16px; padding: 0 3px; border: 0; outline: 0; background: none; font: inherit; }
.box button { padding-right: 5px; }
.tree {
  width: 185px;
  margin: 7px 0 0 7px;
  border-collapse: collapse;
  table-layout: fixed;
}
.c-name { width: 85px; }
.tree th {
  height: 17px;
  padding: 0 0 0 6px;
  border-bottom: 1px solid #c5c8cb;
  background: linear-gradient(#fafafa, #e6e7e9);
  font: 700 12px/16px "Liberation Mono", monospace;
  text-align: left;
  overflow: hidden;
}
.tree th:first-child, .tree td:first-child { border-right: 1px solid #e3e4e6; }
.tree td {
  height: 18px;
  padding: 0 0 0 2px;
  overflow: hidden;
  white-space: nowrap;
  font: 10px/16px "DejaVu Sans Mono", "Noto Sans CJK SC", monospace;
}
.tree td:first-child { padding: 0; }
.node { display: flex; align-items: center; height: 18px; overflow: hidden; }
.node.root { padding-left: 4px; }
.node.root .expander { display: none; }
.node.child { padding-left: 8px; }
.node.grandchild { padding-left: 28px; }
.expander { flex: none; width: 9px; height: 9px; margin-right: 6px; }
.expander.closed { background: #85878a; clip-path: polygon(10% 0, 90% 50%, 10% 100%); }
.expander.open { background: #85878a; clip-path: polygon(0 10%, 100% 10%, 50% 90%); }
.name { margin-left: 4px; }
.name.focused { outline: 1px dotted #111; outline-offset: -1px; }
.name.inserter { font-size: 12px; }
.mark {
  position: absolute;
  left: 35px;
  top: 262px;
  width: 60px;
  height: 90px;
}
.mark path { fill: none; stroke: #fb3939; stroke-width: 8; stroke-linecap: round; stroke-linejoin: round; }

.view {
  position: relative;
  flex: 1;
  min-width: 0;
  overflow: hidden;
  background: linear-gradient(#005e9c, #004a82 30%, #003262 60%, #001d4b 86%, #00173f);
}
.scene { position: absolute; inset: 0; width: 100%; height: 100%; }
.tag { fill: #ff0; font: 12px "Noto Sans", sans-serif; }
.view-bar {
  position: absolute;
  left: 320px;
  top: 7px;
  display: flex;
  height: 28px;
  box-sizing: border-box;
  border: 1px solid #c5c8d0;
  background: #fdfdfd;
}
.view-bar button {
  display: flex;
  align-items: center;
  justify-content: center;
  width: 27px;
  box-sizing: border-box;
  border-right: 1px solid #c8cad0;
}
.view-bar button.pressed { background: linear-gradient(#d9dadd, #f2f2f3); box-shadow: inset 0 0 0 1px #8f9297; }
.grip { width: 6px; box-sizing: border-box; background: #eeeff2; border-right: 1px solid #c8cad0; }
.grip.end { border: 0; }
.brand {
  position: absolute;
  right: 5px;
  bottom: 5px;
  display: flex;
  align-items: center;
  width: 206px;
  height: 62px;
  background: rgba(139, 146, 164, 0.65);
}
.brand > svg { width: 58px; height: 60px; }
.brand-text { flex: 1; display: flex; flex-direction: column; align-items: center; }
.brand strong { color: #08553f; font: 900 29px/36px "Noto Sans CJK SC", sans-serif; }
.brand-text span { color: #39627f; font: 15px/22px "Noto Sans", sans-serif; }
</style>
